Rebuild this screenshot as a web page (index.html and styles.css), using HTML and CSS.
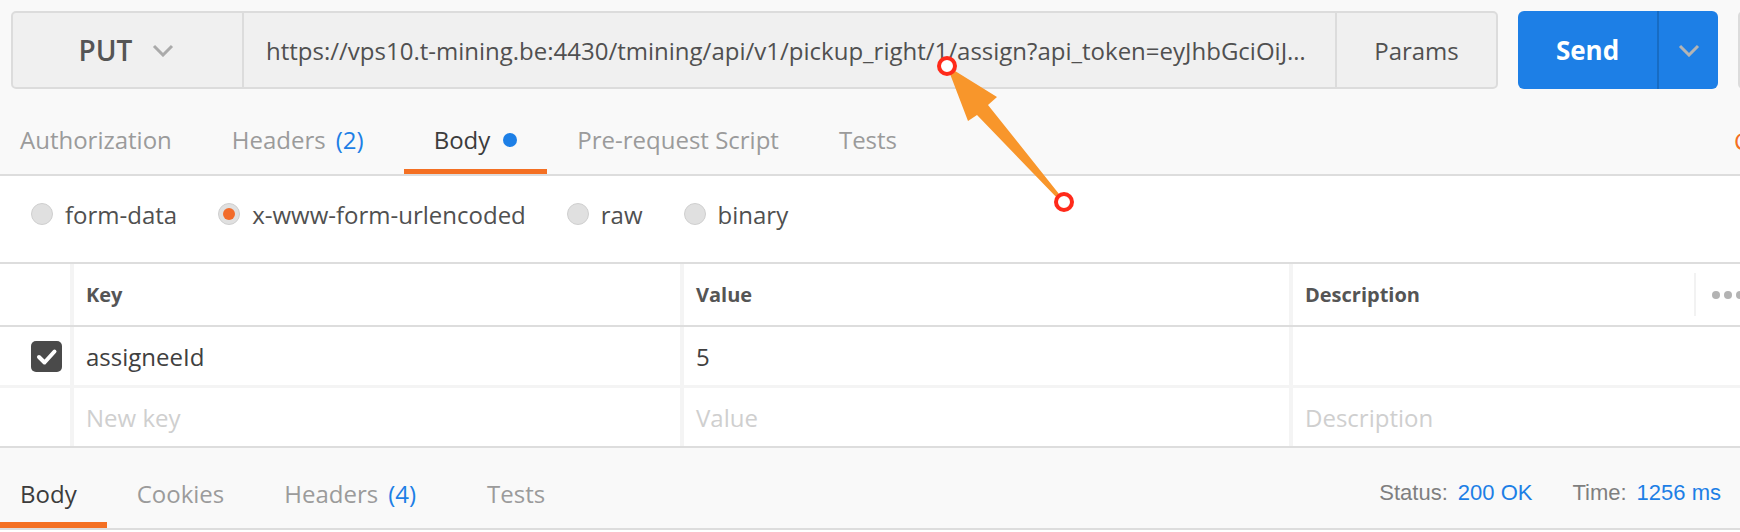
FILE: index.html
```html
<!DOCTYPE html>
<html lang="en">
<head>
<meta charset="utf-8">
<title>Request</title>
<link rel="stylesheet" href="styles.css">
</head>
<body>
<div class="app">
  <header class="request-bar">
    <div class="url-group">
      <div class="method">
        <span class="method-name">PUT</span>
        <svg class="chev" width="22" height="13" viewBox="0 0 22 13"><path d="M2 2 L11 11 L20 2" fill="none" stroke="#aaaaaa" stroke-width="3"/></svg>
      </div>
      <div class="url">https://vps10.t-mining.be:4430/tmining/api/v1/pickup_right/1/assign?api_token=eyJhbGciOiJ…</div>
      <div class="params">Params</div>
    </div>
    <div class="send-group">
      <div class="send">Send</div>
      <div class="send-caret">
        <svg width="22" height="13" viewBox="0 0 22 13"><path d="M2 2 L11 11 L20 2" fill="none" stroke="#b4b4b4" stroke-width="3"/></svg>
      </div>
    </div>
    <div class="save"></div>
  </header>

  <nav class="req-tabs">
    <div class="tab">Authorization</div>
    <div class="tab tab-headers">Headers <span class="count">(2)</span></div>
    <div class="tab active">Body<span class="dot"></span></div>
    <div class="tab">Pre-request Script</div>
    <div class="tab">Tests</div>
    <div class="tab-links">Cookies Code</div>
  </nav>

  <section class="body-modes">
    <label class="radio"><span class="radio-dot"></span>form-data</label>
    <label class="radio"><span class="radio-dot on"></span>x-www-form-urlencoded</label>
    <label class="radio"><span class="radio-dot"></span>raw</label>
    <label class="radio"><span class="radio-dot"></span>binary</label>
  </section>

  <div class="kv-table">
    <div class="kv-row kv-head">
      <div class="cell cell-check"></div>
      <div class="cell">Key</div>
      <div class="cell">Value</div>
      <div class="cell cell-desc">
        <span class="desc-label">Description</span>
        <span class="more"><i></i><i></i><i></i></span>
      </div>
    </div>
    <div class="kv-row kv-item">
      <div class="cell cell-check">
        <span class="checkbox">
          <svg width="31" height="31" viewBox="0 0 31 31"><path d="M8 16 L13.5 21.5 L23.5 10.5" fill="none" stroke="#ffffff" stroke-width="4" stroke-linecap="round" stroke-linejoin="round"/></svg>
        </span>
      </div>
      <div class="cell">assigneeId</div>
      <div class="cell">5</div>
      <div class="cell"></div>
    </div>
    <div class="kv-row kv-item kv-new">
      <div class="cell cell-check"></div>
      <div class="cell placeholder">New key</div>
      <div class="cell placeholder">Value</div>
      <div class="cell placeholder">Description</div>
    </div>
  </div>

  <footer class="response-bar">
    <div class="rtab active">Body</div>
    <div class="rtab">Cookies</div>
    <div class="rtab rtab-headers">Headers <span class="count">(4)</span></div>
    <div class="rtab">Tests</div>
    <div class="meta">
      <span class="meta-label">Status:</span><span class="meta-value">200 OK</span>
      <span class="meta-label meta-gap">Time:</span><span class="meta-value">1256 ms</span>
    </div>
  </footer>

  <svg class="annotation" width="1740" height="532" viewBox="0 0 1740 532">
    <polygon points="947,66 997,97 988,105 1063,199 1060,201 977,115 968,121" fill="#f8962b"/>
    <circle cx="947" cy="66" r="8" fill="#ffffff" stroke="#ff2a1a" stroke-width="4"/>
    <circle cx="1064" cy="202" r="8" fill="#ffffff" stroke="#ff2a1a" stroke-width="4"/>
  </svg>
</div>
</body>
</html>
```

FILE: styles.css
```css
* { box-sizing: border-box; }
html, body { margin: 0; padding: 0; }
body {
  width: 1740px;
  height: 532px;
  overflow: hidden;
  background: #ffffff;
  font-family: "Open Sans", "Noto Sans", sans-serif;
  color: #505050;
}
.app {
  position: relative;
  width: 1740px;
  height: 532px;
  overflow: hidden;
  background: #ffffff;
}

/* request bar */
.request-bar {
  display: flex;
  height: 89px;
  padding: 11px 0 0 11px;
  background: #f9f9f9;
}
.url-group {
  flex-shrink: 0;
  display: flex;
  width: 1487px;
  height: 78px;
  background: #f0f0f0;
  border: 2px solid #dcdcdc;
  border-radius: 5px;
}
.method {
  flex-shrink: 0;
  width: 231px;
  border-right: 2px solid #dcdcdc;
  display: flex;
  align-items: center;
  justify-content: center;
  gap: 20px;
  padding-right: 2px;
  font-size: 28px;
  font-weight: 600;
  color: #555555;
}
.url {
  flex: 1;
  min-width: 0;
  display: flex;
  align-items: center;
  padding-left: 22px;
  font-size: 24px;
  color: #505050;
  white-space: nowrap;
  overflow: hidden;
}
.params {
  flex-shrink: 0;
  width: 161px;
  border-left: 2px solid #dcdcdc;
  display: flex;
  align-items: center;
  justify-content: center;
  font-size: 24px;
  color: #505050;
}
.send-group {
  flex-shrink: 0;
  display: flex;
  width: 200px;
  height: 78px;
  margin-left: 20px;
  background: #1d7fe6;
  border-radius: 6px;
  overflow: hidden;
}
.send {
  width: 139px;
  display: flex;
  align-items: center;
  justify-content: center;
  font-size: 26px;
  font-weight: 700;
  color: #ffffff;
}
.send-caret {
  flex: 1;
  border-left: 2px solid #176cc4;
  display: flex;
  align-items: center;
  justify-content: center;
}
.save {
  flex-shrink: 0;
  width: 120px;
  height: 78px;
  margin-left: 20px;
  background: #f0f0f0;
  border: 2px solid #dcdcdc;
  border-radius: 5px;
}

/* request tabs */
.req-tabs {
  display: flex;
  height: 87px;
  padding-left: 20px;
  background: #f9f9f9;
  border-bottom: 2px solid #dddddd;
}
.tab {
  flex-shrink: 0;
  display: flex;
  align-items: center;
  height: 85px;
  padding: 21px 30px 0;
  border-bottom: 5px solid transparent;
  font-size: 24px;
  color: #9b9b9b;
  white-space: nowrap;
}
.tab:first-child { padding-left: 0; }
.tab-headers { padding-right: 40px; }
.tab.active {
  color: #3c3c3c;
  border-bottom-color: #f47023;
}
.count { color: #1d7fe6; margin-left: 10px; }
.dot {
  width: 14px;
  height: 14px;
  margin-left: 13px;
  border-radius: 50%;
  background: #1d7fe6;
}
.tab-links {
  margin-left: auto;
  width: 6px;
  overflow: hidden;
  display: flex;
  align-items: center;
  padding-top: 17px;
  font-size: 24px;
  color: #f47023;
  white-space: nowrap;
}

/* body mode radios */
.body-modes {
  display: flex;
  align-items: center;
  height: 86px;
  padding: 0 0 10px 31px;
  background: #ffffff;
}
.radio {
  display: flex;
  align-items: center;
  gap: 12px;
  margin-right: 41px;
  font-size: 24px;
  color: #505050;
}
.radio-dot {
  width: 22px;
  height: 22px;
  border-radius: 50%;
  background: #e0e0e0;
  border: 1px solid #cfcfcf;
  display: flex;
  align-items: center;
  justify-content: center;
}
.radio-dot.on::after {
  content: "";
  width: 12px;
  height: 12px;
  border-radius: 50%;
  background: #f26b2a;
}

/* key value table */
.kv-table {
  border-top: 2px solid #dddddd;
  border-bottom: 2px solid #dddddd;
  background: #ffffff;
}
.kv-row {
  display: grid;
  grid-template-columns: 70px 610px 609px 1fr;
}
.kv-head {
  height: 63px;
  border-bottom: 2px solid #dddddd;
}
.kv-item { height: 58px; }
.kv-new {
  height: 61px;
  border-top: 3px solid #f4f4f4;
}
.cell {
  display: flex;
  align-items: center;
  padding-left: 12px;
  border-left: 4px solid #f4f4f4;
  font-size: 24px;
  color: #404040;
  white-space: nowrap;
  overflow: hidden;
}
.kv-head .cell {
  font-size: 20px;
  font-weight: 700;
  color: #555555;
}
.cell-check {
  border-left: none;
  padding-left: 31px;
}
.desc-label { flex: 1; }
.more {
  flex-shrink: 0;
  display: flex;
  align-items: center;
  gap: 4px;
  width: 46px;
  height: 43px;
  padding-left: 16px;
  border-left: 2px solid #f2f2f2;
}
.more i {
  flex-shrink: 0;
  width: 8px;
  height: 8px;
  border-radius: 50%;
  background: #b3b3b3;
}
.checkbox {
  display: flex;
  width: 31px;
  height: 31px;
  border-radius: 5px;
  background: #4a4a4a;
}
.placeholder { color: #cfcfcf; }

/* response bar */
.response-bar {
  display: flex;
  height: 82px;
  background: #f9f9f9;
  border-bottom: 2px solid #dddddd;
}
.rtab {
  flex-shrink: 0;
  display: flex;
  align-items: center;
  height: 80px;
  padding: 16px 30px 0;
  border-bottom: 6px solid transparent;
  font-size: 24px;
  color: #9b9b9b;
  white-space: nowrap;
}
.rtab.active {
  padding-left: 20px;
  padding-right: 30px;
  color: #3c3c3c;
  border-bottom-color: #f47023;
}
.rtab-headers { padding-right: 41px; }
.meta {
  margin-left: auto;
  display: flex;
  align-items: center;
  padding: 10px 19px 0 0;
  font-family: "Liberation Sans", Arial, sans-serif;
  font-size: 22px;
  white-space: nowrap;
}
.meta-label { color: #7f7f7f; margin-right: 10px; }
.meta-value { color: #1d7fe6; }
.meta-gap { margin-left: 40px; }

/* annotation overlay */
.annotation {
  position: absolute;
  left: 0;
  top: 0;
  pointer-events: none;
}
```
